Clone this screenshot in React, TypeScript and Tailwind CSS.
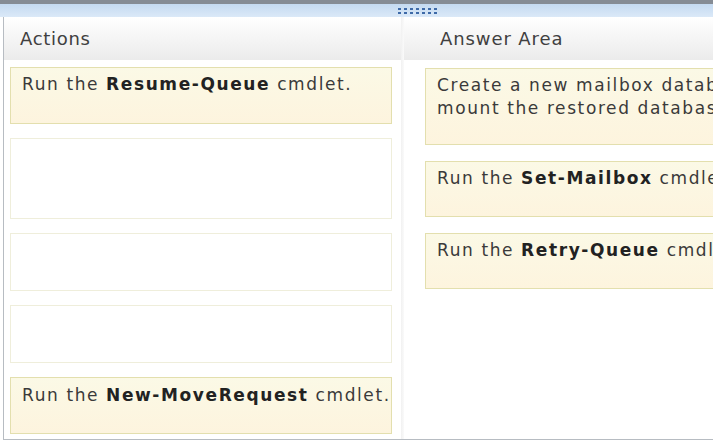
import React from "react";

const font = { fontFamily: '"DejaVu Sans", Verdana, sans-serif' };

function Card({ children, className }: { children?: React.ReactNode; className: string }) {
  return (
    <div
      className={`shrink-0 border px-[11px] pt-[5px] text-[17px] leading-[23px] tracking-[1.6px] text-[#3a3a3a] ${className}`}
    >
      {children}
    </div>
  );
}

const filled =
  "bg-gradient-to-b from-[#fbf9e6] to-[#fdf4de] border-[#e3dfae]";
const empty = "bg-white border-[#efeedb]";

export default function App() {
  return (
    <div className="relative w-[713px] h-[446px] overflow-hidden bg-white" style={font}>
      <div className="h-[4px] bg-[#858c95]" />
      <div className="h-[13px] bg-gradient-to-b from-[#c4daf1] to-[#dbe9f8] flex items-center pl-[398px]">
        <div className="grid grid-cols-7 gap-x-[3px] gap-y-[2px]">
          {Array.from({ length: 14 }).map((_, i) => (
            <div key={i} className="w-[3px] h-[2px] bg-[#3e6aa8]" />
          ))}
        </div>
      </div>
      <div className="flex ml-[3px] border-l border-[#b7bcc2] h-[423px] border-b">
        <div className="w-[397px] shrink-0 flex flex-col">
          <div className="h-[43px] bg-gradient-to-b from-white to-[#ebebeb] flex items-center pl-[16px] text-[18px] tracking-[0.7px] text-[#404040]">
            Actions
          </div>
          <div className="flex flex-col gap-[14px] pl-[6px] pt-[7px] w-[388px]">
            <Card className={`h-[57px] ${filled}`}>
              Run the <b className="text-[#222]">Resume-Queue</b> cmdlet.
            </Card>
            <Card className={`h-[81px] ${empty}`} />
            <Card className={`h-[58px] ${empty}`} />
            <Card className={`h-[58px] ${empty}`} />
            <Card className={`h-[57px] ${filled} pt-[6px] whitespace-nowrap overflow-hidden`}>
              Run the <b className="text-[#222]">New-MoveRequest</b> cmdlet.
            </Card>
          </div>
        </div>
        <div className="w-[3px] shrink-0 bg-gradient-to-r from-[#f1f1f1] to-[#fafafa]" />
        <div className="flex-1 min-w-0 flex flex-col">
          <div className="h-[43px] bg-gradient-to-b from-white to-[#ebebeb] flex items-center pl-[36px] text-[18px] tracking-[0.9px] text-[#404040]">
            Answer Area
          </div>
          <div className="flex flex-col gap-[16px] pl-[21px] pt-[8px]">
            <Card className={`h-[77px] w-[340px] whitespace-nowrap ${filled}`}>
              <div>Create a new mailbox database and</div>
              <div>mount the restored database.</div>
            </Card>
            <Card className={`h-[56px] w-[340px] whitespace-nowrap ${filled}`}>
              Run the <b className="text-[#222]">Set-Mailbox</b> cmdlet.
            </Card>
            <Card className={`h-[56px] w-[340px] whitespace-nowrap ${filled}`}>
              Run the <b className="text-[#222]">Retry-Queue</b> cmdlet.
            </Card>
          </div>
        </div>
      </div>
    </div>
  );
}
